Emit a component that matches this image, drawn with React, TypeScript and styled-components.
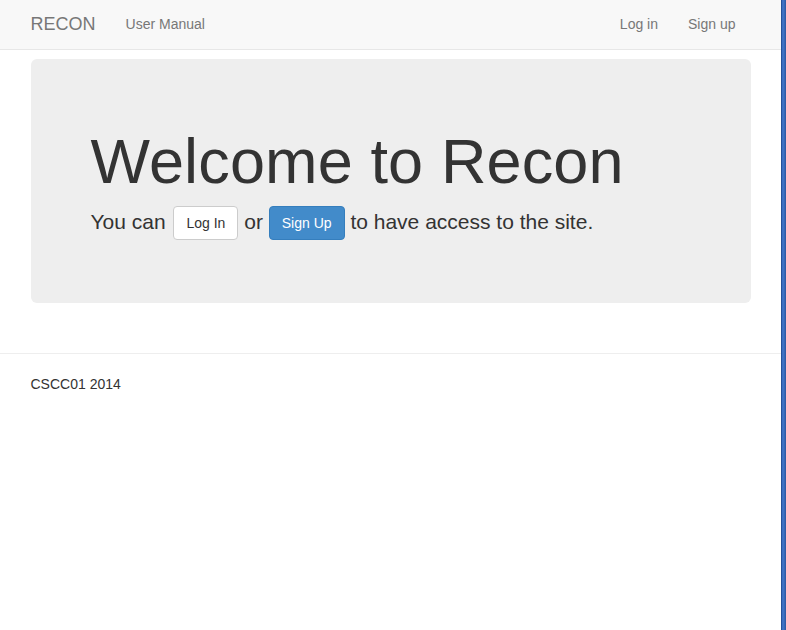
import React from "react";
import styled, { createGlobalStyle } from "styled-components";

const GlobalStyle = createGlobalStyle`
  html, body { margin: 0; padding: 0; background: #fff; }
  body {
    font-family: "Liberation Sans", Arial, Helvetica, sans-serif;
    font-size: 14px;
    line-height: 1.428571429;
    color: #333;
  }
  * { box-sizing: border-box; }
`;

const Page = styled.div`
  display: flex;
  min-height: 630px;
`;

const Main = styled.div`
  flex: 1;
  min-width: 0;
  display: flex;
  flex-direction: column;
`;

const EdgeBar = styled.div`
  width: 5px;
  flex: none;
  background: linear-gradient(to right, #24509a 0, #24509a 1px, #3a6cbf 1px, #4274c6 3px, #2f5ca8 4px, #2f5ca8 5px);
`;

const Container = styled.div`
  width: 750px;
  margin: 0 auto;
  padding: 0 15px;
`;

const Navbar = styled.nav`
  height: 50px;
  background: #f8f8f8;
  border-bottom: 1px solid #e7e7e7;
`;

const NavInner = styled.div`
  display: flex;
  align-items: stretch;
  height: 49px;
  padding-bottom: 2px;
  margin-left: -15px;
`;

const Brand = styled.a`
  display: flex;
  align-items: center;
  padding: 0 15px;
  font-size: 18px;
  line-height: 20px;
  color: #777;
  text-decoration: none;
`;

const NavList = styled.ul<{ $right?: boolean }>`
  display: flex;
  list-style: none;
  margin: 0;
  padding: 0;
  margin-left: ${(p) => (p.$right ? "auto" : "0")};
`;

const NavLink = styled.a`
  display: flex;
  align-items: center;
  height: 100%;
  padding: 0 15px;
  color: #777;
  text-decoration: none;
  font-size: 14px;
  line-height: 20px;
`;

const Jumbotron = styled.div`
  margin-top: 9px;
  margin-bottom: 30px;
  padding: 48px 60px;
  background: #eee;
  border-radius: 6px;
`;

const Title = styled.h1`
  margin: 20px 0 10px;
  font-size: 63px;
  line-height: 1.1;
  font-weight: 500;
  letter-spacing: 0.13px;
  color: #333;
`;

const Lead = styled.p`
  margin: 0 0 15px;
  font-size: 21px;
  line-height: 1.428571429;
  font-weight: 200;
`;

const Button = styled.a<{ $primary?: boolean; $lead?: number }>`
  display: inline-block;
  margin-left: ${(p) => p.$lead ?? 0}px;
  padding: 6px 12px;
  font-size: 14px;
  line-height: 20px;
  border-radius: 4px;
  border: 1px solid ${(p) => (p.$primary ? "#357ebd" : "#ccc")};
  background: ${(p) => (p.$primary ? "#428bca" : "#fff")};
  color: ${(p) => (p.$primary ? "#fff" : "#333")};
  text-decoration: none;
  vertical-align: middle;
  cursor: pointer;
`;

const Rule = styled.hr`
  width: 100%;
  margin: 20px 0;
  border: 0;
  border-top: 1px solid #eee;
`;

const FooterText = styled.p`
  margin: 0 0 10px;
`;

export default function App() {
  return (
    <>
      <GlobalStyle />
      <Page>
        <Main>
          <Navbar>
            <Container>
              <NavInner>
                <Brand href="#">RECON</Brand>
                <NavList>
                  <li><NavLink href="#">User Manual</NavLink></li>
                </NavList>
                <NavList $right>
                  <li><NavLink href="#">Log in</NavLink></li>
                  <li><NavLink href="#">Sign up</NavLink></li>
                </NavList>
              </NavInner>
            </Container>
          </Navbar>
          <Container>
            <Jumbotron>
              <Title>Welcome to Recon</Title>
              <Lead>
                You can <Button href="#" $lead={2}>Log In</Button> or{" "}
                <Button href="#" $primary>Sign Up</Button> to have access to the site.
              </Lead>
            </Jumbotron>
          </Container>
          <Rule />
          <Container>
            <FooterText>CSCC01 2014</FooterText>
          </Container>
        </Main>
        <EdgeBar />
      </Page>
    </>
  );
}
